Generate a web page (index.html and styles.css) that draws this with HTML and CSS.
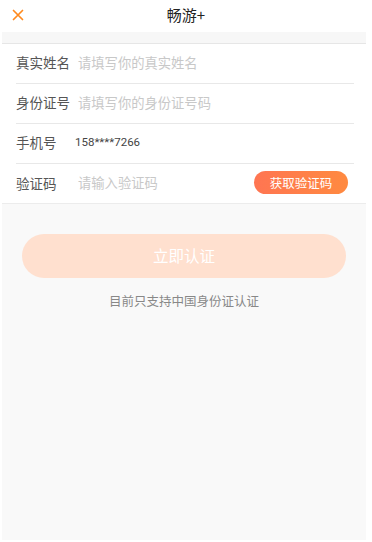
FILE: index.html
```html
<html>
<head>
    <title>畅游+ - 实名认证</title>
    <meta charset="utf-8">
    <link rel="stylesheet" href="styles.css">
</head>
<body>
    <header class="topbar">
        <span class="close">
            <svg width="12" height="12" viewBox="0 0 12 12"><path d="M1.5 1.5 L10.5 10.5 M10.5 1.5 L1.5 10.5" stroke="#ff8a1f" stroke-width="1.7" stroke-linecap="round"/></svg>
        </span>
        <h1>畅游+</h1>
    </header>
    <div class="page">
        <div class="gap"></div>
        <section class="form">
            <div class="row">
                <label>真实姓名</label>
                <span class="hint">请填写你的真实姓名</span>
            </div>
            <div class="row">
                <label>身份证号</label>
                <span class="hint">请填写你的身份证号码</span>
            </div>
            <div class="row">
                <label>手机号</label>
                <span class="phone">158****7266</span>
            </div>
            <div class="row last">
                <label>验证码</label>
                <span class="hint">请输入验证码</span>
                <button class="code-btn">获取验证码</button>
            </div>
        </section>
        <div class="actions">
            <button class="submit">立即认证</button>
            <p class="note">目前只支持中国身份证认证</p>
        </div>
    </div>
</body>
</html>
```

FILE: styles.css
```css
body { margin: 0; background-color: #fff; font-family: "Noto Sans CJK SC", "Noto Sans", sans-serif; }
.topbar { height: 32px; box-sizing: border-box; padding-bottom: 3px; display: flex; align-items: center; justify-content: center; position: relative; background-color: #fff; }
.topbar h1 { margin: 0; font-size: 15px; line-height: 20px; font-weight: normal; color: #222; }
.close { position: absolute; left: 12px; top: 9px; display: flex; }
.page { margin: 0 6px 2px 2px; height: 508px; background-color: #f9f9f9; }
.gap { height: 11px; background-color: #f7f7f7; border-bottom: 1px solid #e6e6e6; }
.form { background-color: #fff; border-bottom: 1px solid #ececec; padding-left: 14px; padding-right: 12px; }
.row { height: 40px; box-sizing: border-box; padding-bottom: 3px; display: flex; align-items: center; border-bottom: 1px solid #e8e8e8; }
.row.last { border-bottom: none; height: 39px; padding-bottom: 2px; }
.row label { width: 62px; font-size: 13.5px; color: #555; }
.hint { font-size: 13.3px; color: #c8c8c8; flex: 1; }
.phone { font-size: 11.5px; color: #444; font-family: Roboto, sans-serif; margin-left: -3px; }
.code-btn { margin-left: auto; margin-right: 6px; width: 94px; height: 23px; border: none; border-radius: 12px; padding: 0 0 1px 0; background: linear-gradient(to right, #ff7552, #ff8a40); color: #fff; font-size: 12.5px; font-family: inherit; }
.actions { padding: 30px 20px 0 20px; text-align: center; }
.submit { width: 100%; height: 44px; border: none; border-radius: 22px; padding: 0 0 2px 0; background-color: #ffe0cf; color: #fff; font-size: 15.5px; font-family: inherit; }
.note { margin: 13px 0 0 0; font-size: 12.5px; color: #888; }
```
